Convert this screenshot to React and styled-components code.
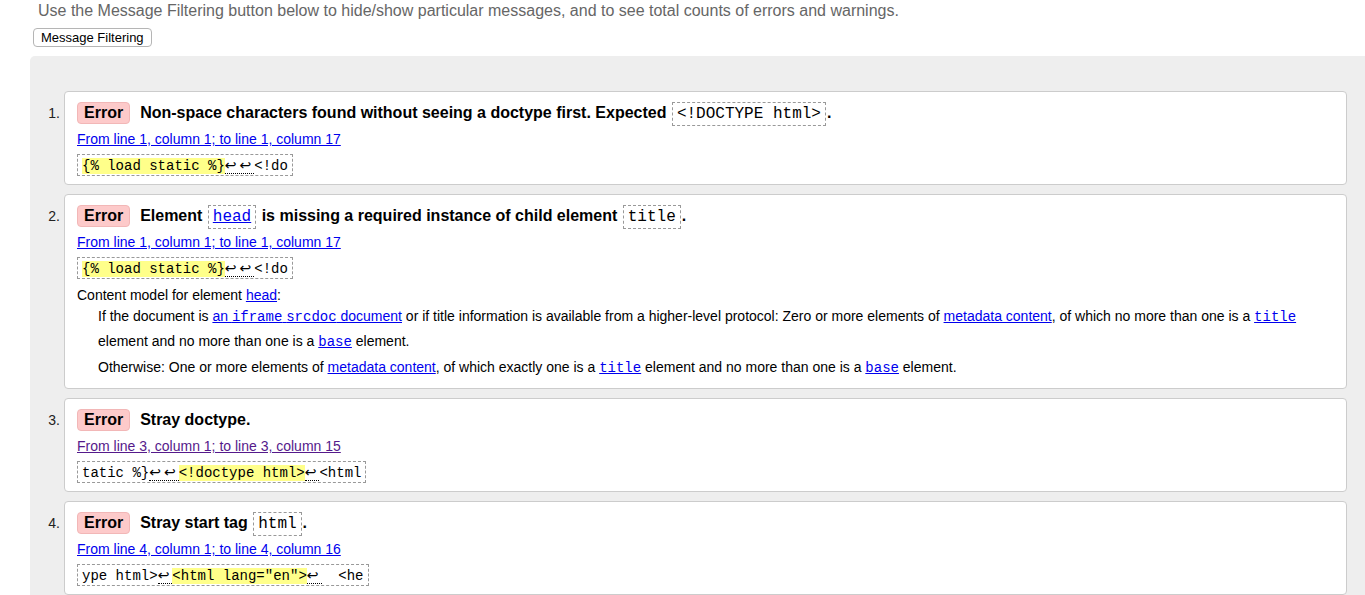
import React from "react";
import styled, { createGlobalStyle } from "styled-components";

const Global = createGlobalStyle`
  html, body { margin: 0; padding: 0; background: #fff; overflow: hidden; }
  body { font-family: "Liberation Sans", Arial, sans-serif; color: #000; }
`;

const Page = styled.div`
  padding: 2px 0 0 30px;
`;

const Intro = styled.p`
  margin: 0 0 0 8px;
  font-size: 16px;
  line-height: 18px;
  color: #666;
`;

const FilterButton = styled.button`
  display: block;
  margin: 8px 0 0 3px;
  height: 19px;
  padding: 0 7px;
  font-family: "Liberation Sans", Arial, sans-serif;
  font-size: 13px;
  line-height: 17px;
  color: #000;
  background: #fff;
  border: 1px solid #b5b5b5;
  border-radius: 4px;
`;

const Results = styled.ol`
  list-style: none;
  margin: 9px 0 0 0;
  padding: 35px 18px 20px 0;
  background: #eee;
  border-top-left-radius: 5px;
  display: flex;
  flex-direction: column;
  gap: 9px;
`;

const Item = styled.li`
  display: flex;
  align-items: flex-start;
`;

const Num = styled.span`
  flex: 0 0 34px;
  box-sizing: border-box;
  padding: 10px 4px 0 0;
  text-align: right;
  font-size: 14px;
  line-height: 24px;
  color: #222;
`;

const Card = styled.div`
  flex: 1;
  min-width: 0;
  background: #fff;
  border: 1px solid #ccc;
  border-radius: 4px;
  padding: 8px 12px 8px 12px;
`;

const Title = styled.p`
  margin: 0;
  display: flex;
  align-items: center;
  height: 24px;
  padding-top: 1px;
  font-size: 16px;
  font-weight: bold;
  line-height: 24px;
`;

const Badge = styled.strong`
  display: inline-block;
  flex: none;
  margin-right: 10px;
  padding: 0 6px;
  height: 20px;
  line-height: 20px;
  background: #fdcaca;
  border: 1px solid #f2b7b7;
  border-radius: 4px;
  font-size: 16px;
`;

const Msg = styled.span`
  white-space: pre-wrap;
  line-height: 24px;
`;

const Code = styled.code`
  font-family: "Liberation Mono", "Courier New", monospace;
  font-size: 16px;
  font-weight: normal;
  padding: 2px 4px;
  margin: 0 1px;
  border: 1px dashed #999;
`;

const Link = styled.a`
  color: ${(p) => (p.$visited ? "#551a8b" : "#0000ee")};
  text-decoration: underline;
`;

const Location = styled.p`
  margin: 5px 0 0 0;
  height: 18px;
  font-size: 14px;
  line-height: 18px;
`;

const ExtractWrap = styled.div`
  display: flex;
  margin-top: 6px;
`;

const Extract = styled.p`
  margin: 0;
  height: 16px;
  padding: 2px 4px;
  border: 1px dashed #999;
  font-family: "Liberation Mono", "Courier New", monospace;
  font-size: 14px;
  line-height: 16px;
  white-space: pre;
`;

const Mark = styled.b`
  font-weight: normal;
  background: #ffff8a;
`;

const Lf = styled.span`
  border-bottom: 1px dotted #000;
  font-family: "DejaVu Sans", sans-serif;
  font-size: 14px;
  line-height: 16px;
  letter-spacing: 3px;
`;

const Detail = styled.div`
  margin-top: 7px;
  font-size: 14px;
  line-height: 18px;
`;

const DetailHead = styled.p`
  margin: 0;
  height: 18px;
`;

const DetailPara = styled.p`
  margin: ${(p) => (p.$first ? "0" : "1px")} 0 0 21px;
  line-height: 25px;
`;

const Mono = styled.code`
  font-family: "Liberation Mono", "Courier New", monospace;
  font-size: 14px;
  line-height: 1;
`;

const ErrorBadge = () => <Badge>Error</Badge>;

const LF = ({ children = "↩" }) => <Lf>{children}</Lf>;

export default function App() {
  return (
    <>
      <Global />
      <Page>
        <Intro>
          Use the Message Filtering button below to hide/show particular messages, and to see total counts of errors and warnings.
        </Intro>
        <FilterButton>Message Filtering</FilterButton>
        <Results>
          <Item>
            <Num>1.</Num>
            <Card>
              <Title>
                <ErrorBadge />
                <Msg>
                  Non-space characters found without seeing a doctype first. Expected <Code>&lt;!DOCTYPE html&gt;</Code>.
                </Msg>
              </Title>
              <Location>
                <Link href="#">From line 1, column 1; to line 1, column 17</Link>
              </Location>
              <ExtractWrap>
                <Extract>
                  <Mark>{"{% load static %}"}</Mark>
                  <LF>↩↩</LF>
                  {"<!do"}
                </Extract>
              </ExtractWrap>
            </Card>
          </Item>
          <Item>
            <Num>2.</Num>
            <Card>
              <Title>
                <ErrorBadge />
                <Msg>
                  Element <Code><Link href="#">head</Link></Code> is missing a required instance of child element <Code>title</Code>.
                </Msg>
              </Title>
              <Location>
                <Link href="#">From line 1, column 1; to line 1, column 17</Link>
              </Location>
              <ExtractWrap>
                <Extract>
                  <Mark>{"{% load static %}"}</Mark>
                  <LF>↩↩</LF>
                  {"<!do"}
                </Extract>
              </ExtractWrap>
              <Detail>
                <DetailHead>
                  Content model for element <Link href="#">head</Link>:
                </DetailHead>
                <DetailPara $first>
                  If the document is <Link href="#">an <Mono>iframe</Mono> <Mono>srcdoc</Mono> document</Link> or if title information is available from a higher-level protocol: Zero or more elements of <Link href="#">metadata content</Link>, of which no more than one is a <Link href="#"><Mono>title</Mono></Link> element and no more than one is a <Link href="#"><Mono>base</Mono></Link> element.
                </DetailPara>
                <DetailPara>
                  Otherwise: One or more elements of <Link href="#">metadata content</Link>, of which exactly one is a <Link href="#"><Mono>title</Mono></Link> element and no more than one is a <Link href="#"><Mono>base</Mono></Link> element.
                </DetailPara>
              </Detail>
            </Card>
          </Item>
          <Item>
            <Num>3.</Num>
            <Card>
              <Title>
                <ErrorBadge />
                <Msg>Stray doctype.</Msg>
              </Title>
              <Location>
                <Link href="#" $visited>From line 3, column 1; to line 3, column 15</Link>
              </Location>
              <ExtractWrap>
                <Extract>
                  {"tatic %}"}
                  <LF>↩↩</LF>
                  <Mark>{"<!doctype html>"}</Mark>
                  <LF />
                  {"<html"}
                </Extract>
              </ExtractWrap>
            </Card>
          </Item>
          <Item>
            <Num>4.</Num>
            <Card>
              <Title>
                <ErrorBadge />
                <Msg>
                  Stray start tag <Code>html</Code>.
                </Msg>
              </Title>
              <Location>
                <Link href="#">From line 4, column 1; to line 4, column 16</Link>
              </Location>
              <ExtractWrap>
                <Extract>
                  {"ype html>"}
                  <LF />
                  <Mark>{'<html lang="en">'}</Mark>
                  <LF />
                  {"  <he"}
                </Extract>
              </ExtractWrap>
            </Card>
          </Item>
        </Results>
      </Page>
    </>
  );
}
